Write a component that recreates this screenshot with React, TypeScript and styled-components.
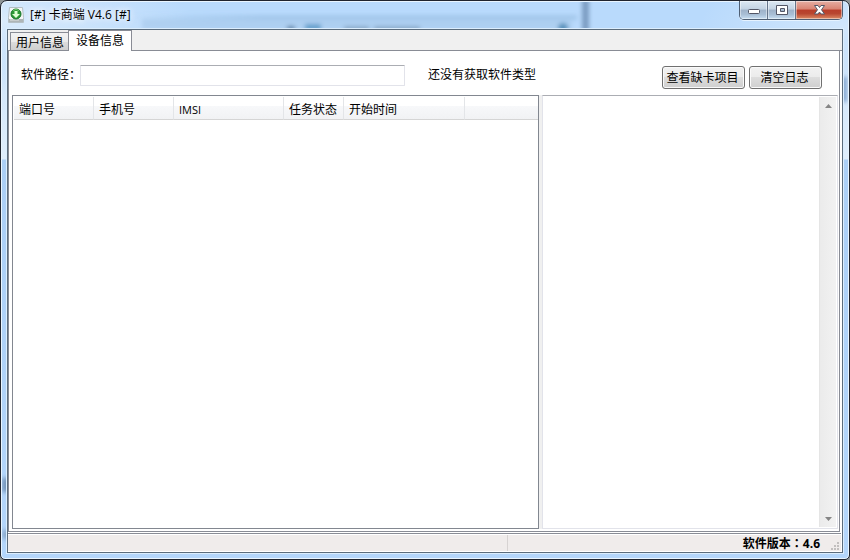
import React, { useState } from "react";
import styled, { createGlobalStyle } from "styled-components";

const GlobalStyle = createGlobalStyle`
  * { box-sizing: border-box; }
  body {
    margin: 0;
    background: #8e9496;
    color: #000;
    font: 12px/16px "Liberation Sans", "Noto Sans CJK SC", sans-serif;
  }
  button, input, textarea { font: inherit; color: inherit; }
`;

const Window = styled.div`
  position: relative;
  display: flex;
  flex-direction: column;
  min-height: 100vh;
  padding: 0 6px 6px;
  overflow: hidden;
  border: 1px solid #20242e;
  border-radius: 7px 7px 5px 5px;
  background:
    radial-gradient(ellipse 190px 60px at 0 20px, rgba(226, 239, 252, .8), rgba(226, 239, 252, 0)),
    radial-gradient(ellipse 150px 60px at 100% 26px, rgba(226, 239, 252, .6), rgba(226, 239, 252, 0)),
    linear-gradient(#b9dafc 0, #b9dafc 40px, #d4e7fa 90px, #dfeefc 158px, #abcff6 159px, #b4d6fb 100%);
  box-shadow: inset 0 0 0 1px #e9f5ff;
`;

const Glass = styled.svg`
  position: absolute;
  inset: 1px;
  width: calc(100% - 2px);
  height: calc(100% - 2px);
  pointer-events: none;
`;

const TitleBar = styled.header`
  position: relative;
  display: flex;
  align-items: flex-start;
  height: 28px;
`;

const AppIcon = styled.svg`
  flex: none;
  width: 16px;
  height: 16px;
  margin: 6px 6px 0 1px;
`;

const Title = styled.h1`
  margin: 6px 0 0;
  font: 12px/16px "Open Sans", "Noto Sans CJK SC", sans-serif;
  text-shadow: 0 0 6px #fff, 0 0 8px #fff;
`;

const Controls = styled.div`
  display: flex;
  height: 19px;
  margin-left: auto;
  border: 1px solid #4f5f74;
  border-top: 0;
  border-radius: 0 0 5px 5px;
  overflow: hidden;
  box-shadow: 0 1px 0 #e6f3ff;
`;

const Control = styled.button<{ $close?: boolean }>`
  display: grid;
  place-items: center;
  width: ${p => (p.$close ? 46 : 28)}px;
  padding: 0;
  border: 0;
  border-right: ${p => (p.$close ? "0" : "1px solid #65758b")};
  background: ${p => p.$close
    ? "linear-gradient(#e6aea3 0, #d98473 45%, #b93d2a 50%, #b84630 70%, #dc8b65 100%)"
    : "linear-gradient(#dce8f3 0, #c3d3e3 45%, #9eb2c9 50%, #a9bfd6 75%, #c7def2 100%)"};
  box-shadow: inset 0 0 0 1px rgba(255, 255, 255, .45);
  svg { display: block; }
`;

const Client = styled.main`
  position: relative;
  display: flex;
  flex: 1;
  flex-direction: column;
  border: 1px solid #5b6c7c;
  background: #fff;
  box-shadow: 0 0 0 1px #dceefe;
`;

const TabStrip = styled.div`
  display: flex;
  align-items: flex-end;
  height: 21px;
  padding-left: 2px;
  background: #f0f0f0;
  border-bottom: 1px solid #898c95;
`;

const Tab = styled.button<{ $active: boolean }>`
  height: ${p => (p.$active ? 21 : 18)}px;
  margin-bottom: ${p => (p.$active ? -1 : 0)}px;
  padding: ${p => (p.$active ? "0 7px 1px" : "2px 4px 0 5px")};
  border: 1px solid #898c95;
  border-bottom: 0;
  background: ${p => (p.$active ? "#fff" : "linear-gradient(#f2f2f2, #ebebeb 50%, #dddddd 50%, #cfcfcf)")};
  & + & { border-left-width: ${p => (p.$active ? 1 : 0)}px; }
  &:first-child { border-right-width: ${p => (p.$active ? 1 : 0)}px; }
`;

const Panel = styled.section`
  display: flex;
  flex: 1;
  flex-direction: column;
  margin-right: 2px;
  padding: 0 1px 2px 3px;
  border: 1px solid #898c95;
  border-top: 0;
`;

const Toolbar = styled.div`
  display: flex;
  align-items: center;
  height: 44px;
  padding: 4px 16px 0 9px;
`;

const PathLabel = styled.label`
  width: 59px;
  white-space: nowrap;
`;

const PathInput = styled.input`
  flex: 0 1 325px;
  min-width: 60px;
  height: 21px;
  padding: 0 4px;
  border: 1px solid #e2e3ea;
  border-top-color: #abadb3;
  border-radius: 1px;
  background: #fff;
`;

const SoftwareType = styled.span`
  margin-left: 23px;
  white-space: nowrap;
`;

const Actions = styled.div`
  display: flex;
  gap: 4px;
  margin: 4px 0 0 auto;
`;

const Button = styled.button<{ $wide?: boolean }>`
  width: ${p => (p.$wide ? 83 : 73)}px;
  height: 23px;
  padding: 1px 2px 0 0;
  border: 1px solid #707070;
  border-radius: 3px;
  background: linear-gradient(#f2f2f2, #ebebeb 50%, #dddddd 50%, #cfcfcf);
  box-shadow: inset 0 0 0 1px #fafafa;
  white-space: nowrap;
`;

const Split = styled.div`
  display: grid;
  flex: 1;
  grid-template-columns: 527fr 296fr;
  gap: 3px;
  background: #f0f0f0;
`;

const DeviceList = styled.div`
  padding: 1px 0 0 1px;
  border: 1px solid #828790;
  background: #fff;
`;

const DeviceTable = styled.table`
  width: 100%;
  table-layout: fixed;
  border-collapse: separate;
  border-spacing: 0;
`;

const HeadCell = styled.th<{ $width?: number }>`
  width: ${p => (p.$width ? `${p.$width}px` : "auto")};
  height: 23px;
  padding: 3px 0 0 5px;
  border-right: ${p => (p.$width ? "1px solid #e3e5e8" : "0")};
  border-bottom: 1px solid #d5d5d5;
  background: linear-gradient(#fff 0, #fff 40%, #f7f8fa 42%, #f1f2f4 100%);
  font-weight: normal;
  line-height: 16px;
  text-align: left;
  white-space: nowrap;
`;

const Latin = styled.span`
  font: 11px/16px "Open Sans", sans-serif;
`;

const LogFrame = styled.div`
  display: flex;
  padding: 1px;
  border: 1px solid #e2e3ea;
  border-top-color: #abadb3;
  background: #fff;
`;

const LogText = styled.textarea`
  flex: 1;
  min-width: 0;
  padding: 2px;
  border: 0;
  outline: 0;
  resize: none;
  background: #fff;
`;

const ScrollTrack = styled.div`
  display: flex;
  flex-direction: column;
  justify-content: space-between;
  width: 17px;
  border-left: 1px solid #e5e5e5;
  background: linear-gradient(90deg, #ebebeb, #f2f2f2);
`;

const ScrollButton = styled.button`
  display: grid;
  place-items: center;
  width: 16px;
  height: 17px;
  padding: 0;
  border: 0;
  background: none;
`;

const StatusBar = styled.footer`
  display: flex;
  align-items: stretch;
  height: 19px;
  margin: 1px 1px 0 0;
  padding-bottom: 1px;
  border-top: 1px solid #898c95;
`;

const StatusCell = styled.div<{ $grow: number }>`
  display: flex;
  flex: ${p => p.$grow} 1 0;
  align-items: center;
  justify-content: flex-end;
  margin-top: 1px;
  padding-top: 1px;
  border-right: ${p => (p.$grow > 400 ? "1px solid #d7d3d2" : "0")};
  background: #f0eceb;
  font: bold 12px/16px "Open Sans", "Noto Sans CJK SC", sans-serif;
`;

const CenteredMark = styled.span`
  font-family: "Noto Sans CJK TC", sans-serif;
`;

const Grip = styled.svg`
  align-self: flex-end;
  width: 10px;
  height: 10px;
  margin: 0 1px 0 10px;
`;

const columns = [
  { name: "端口号", width: 80 },
  { name: "手机号", width: 80 },
  { name: "IMSI", width: 110 },
  { name: "任务状态", width: 60 },
  { name: "开始时间", width: 121 },
  { name: "", width: undefined },
];

function GlassReflection() {
  return (
    <Glass aria-hidden="true">
      <defs>
        <filter id="soft" x="-20%" y="-50%" width="140%" height="200%"><feGaussianBlur stdDeviation="2" /></filter>
        <linearGradient id="shade" x1="0" x2="1">
          <stop offset="0" stopColor="#79a5cc" stopOpacity="0" />
          <stop offset=".3" stopColor="#79a5cc" stopOpacity=".35" />
          <stop offset="1" stopColor="#79a5cc" stopOpacity=".35" />
        </linearGradient>
      </defs>
      <g filter="url(#soft)">
        <rect x="125" y="13" width="450" height="5" fill="url(#shade)" />
        <rect x="140" y="17" width="430" height="11" fill="#a5c8ea" opacity=".6" />
        <rect x="580" y="-3" width="7" height="35" fill="#7c9dc2" />
        <rect x="285" y="24" width="8" height="5" fill="#6689ac" />
        <rect x="303" y="22" width="16" height="7" fill="#69a2ce" />
        <path d="M342 27h25M372 27h46" stroke="#718eab" strokeWidth="5" opacity=".65" />
        <circle cx="561" cy="26" r="5" fill="#5b93bc" />
        <rect x="0" y="476" width="8" height="14" fill="#7797bb" />
        <rect x="0" y="528" width="8" height="9" fill="#8aaacd" />
      </g>
      <svg x="100%" overflow="visible">
        <rect x="-7" y="75" width="6" height="25" fill="#84a7d0" filter="url(#soft)" />
      </svg>
    </Glass>
  );
}

export default function App() {
  const [active, setActive] = useState(1);
  const [path, setPath] = useState("");
  const [log, setLog] = useState("");
  return (
    <>
      <GlobalStyle />
      <Window>
        <GlassReflection />
        <TitleBar>
          <AppIcon viewBox="0 0 16 16" aria-hidden="true">
            <path d="M1.500 .5h13l1 10v5H.5v-5z" fill="#f4f6f6" stroke="#b4bfc5" />
            <path d="M1 12h14v3H1z" fill="#aeb5b7" />
            <path d="M2 13h9" stroke="#dfe3e4" />
            <circle cx="8" cy="7" r="5" fill="#2b9934" stroke="#17752b" />
            <path d="M5 3.500a5 5 0 0 1 6 0" stroke="#75ca72" fill="none" />
            <path d="M6.500 4h3v3H12l-4 4-4-4h2.500z" fill="#e0ffd5" />
          </AppIcon>
          <Title>[#] 卡商端 V4.6 [#]</Title>
          <Controls>
            <Control aria-label="最小化">
              <svg width="14" height="12"><rect x="1.500" y="5.500" width="11" height="4" rx="1" fill="#fff" stroke="#535666" /></svg>
            </Control>
            <Control aria-label="最大化">
              <svg width="14" height="12">
                <path d="M1.500 1.500h11v9h-11zM5.500 4.500v3h4v-3z" fill="#fff" fillRule="evenodd" stroke="#535666" />
              </svg>
            </Control>
            <Control $close aria-label="关闭">
              <svg width="13" height="12">
                <path d="M1.500 1.500h3.500l1.500 2 1.500-2h3.500L8.500 5.750l3 4.250H8l-1.500-2L5 10H1.500l3-4.250z" fill="#fff" stroke="#535666" strokeLinejoin="round" />
              </svg>
            </Control>
          </Controls>
        </TitleBar>
        <Client>
          <TabStrip role="tablist">
            {["用户信息", "设备信息"].map((name, i) => (
              <Tab key={name} role="tab" aria-selected={active === i} $active={active === i} onClick={() => setActive(i)}>{name}</Tab>
            ))}
          </TabStrip>
          <Panel role="tabpanel">
            <Toolbar>
              <PathLabel htmlFor="path">软件路径：</PathLabel>
              <PathInput id="path" value={path} onChange={e => setPath(e.target.value)} />
              <SoftwareType>还没有获取软件类型</SoftwareType>
              <Actions>
                <Button $wide>查看缺卡项目</Button>
                <Button onClick={() => setLog("")}>清空日志</Button>
              </Actions>
            </Toolbar>
            <Split>
              <DeviceList>
                <DeviceTable>
                  <thead>
                    <tr>
                      {columns.map(c => (
                        <HeadCell key={c.name} $width={c.width}>
                          {c.name === "IMSI" ? <Latin>{c.name}</Latin> : c.name}
                        </HeadCell>
                      ))}
                    </tr>
                  </thead>
                </DeviceTable>
              </DeviceList>
              <LogFrame>
                <LogText aria-label="日志" value={log} onChange={e => setLog(e.target.value)} />
                <ScrollTrack>
                  <ScrollButton aria-label="向上滚动">
                    <svg width="7" height="4"><path d="M3.500 0L7 4H0z" fill="#858585" /></svg>
                  </ScrollButton>
                  <ScrollButton aria-label="向下滚动">
                    <svg width="7" height="4"><path d="M0 0h7L3.500 4z" fill="#858585" /></svg>
                  </ScrollButton>
                </ScrollTrack>
              </LogFrame>
            </Split>
          </Panel>
          <StatusBar>
            <StatusCell $grow={500} />
            <StatusCell $grow={333}>
              <span>软件版本<CenteredMark lang="zh-TW">：</CenteredMark>4.6</span>
              <Grip viewBox="0 0 10 10" aria-hidden="true">
                <path d="M7 1h2v2H7zM4 4h2v2H4zM7 4h2v2H7zM1 7h2v2H1zM4 7h2v2H4zM7 7h2v2H7z" fill="#c2bfbe" />
              </Grip>
            </StatusCell>
          </StatusBar>
        </Client>
      </Window>
    </>
  );
}
